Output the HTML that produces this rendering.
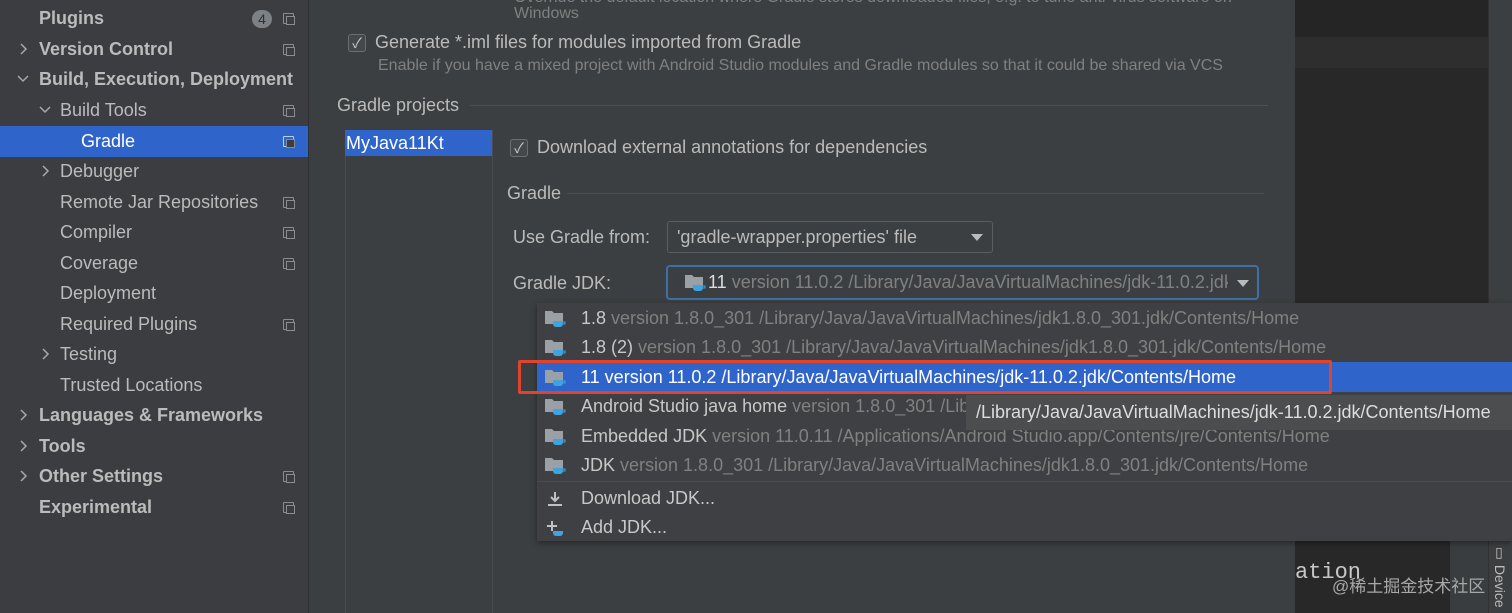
<!DOCTYPE html>
<html><head><meta charset="utf-8"><style>
body{margin:0;width:1512px;height:613px;overflow:hidden;background:#3c3f41;font-family:"Liberation Sans","Noto Sans CJK SC",sans-serif;font-size:18px;color:#bbbbbb;position:relative}
.a{position:absolute;white-space:nowrap}
.side{position:absolute;left:0;top:0;width:308px;height:613px;background:#3b3d41;border-right:1px solid #2e3033}
.si{position:absolute;left:0;width:308px;height:31px;line-height:31px}
.b{font-weight:bold}
.cp{position:absolute;left:283px;top:10px;width:9px;height:9px;border:1px solid #8a8d90;border-radius:1px}
.cp:after{content:"";position:absolute;left:2px;top:2px;width:7px;height:7px;border:1px solid #8a8d90;background:#3b3d41}
.chev{position:absolute;top:9px}
.cb{position:absolute;width:16px;height:16px;border:1px solid #6b6e71;border-radius:3px;background:#45484a;color:#ccc;font-size:14px;line-height:16px;text-align:center}
.g{color:#808080}
.pi{position:absolute;left:537px;width:975px;height:30px;line-height:30px}
.ic{position:absolute;left:8px;top:7px}
.pt{position:absolute;left:44px;color:#c8c8c8}
</style></head><body>
<svg width="0" height="0" style="position:absolute"><defs>
<g id="cr"><path d="M2 1l5 5-5 5" stroke="#a8a8a8" stroke-width="1.5" fill="none"/></g>
<g id="cd"><path d="M1 3l5 5 5-5" stroke="#a8a8a8" stroke-width="1.5" fill="none"/></g>
<g id="jf"><path d="M0 1h7l2 2h9v11H0z" fill="#9aa0a6"/><path d="M8 11h10v3a3 3 0 0 1-3 3h-4a3 3 0 0 1-3-3z" fill="#3fa3e0"/><path d="M18 12h2v2h-2" stroke="#3fa3e0" fill="none"/></g>
</defs></svg>
<div class="side">
 <div class="si b" style="top:3px"><span class="a" style="left:39px">Plugins</span><span class="a" style="left:252px;top:7px;width:20px;height:18px;border-radius:9px;background:#7d8186;color:#2f3134;font-size:14px;line-height:18px;text-align:center;font-weight:normal">4</span><span class="cp"></span></div>
 <div class="si b" style="top:34px"><svg class="chev" style="left:19px" width="12" height="12"><use href="#cr"/></svg><span class="a" style="left:39px">Version Control</span><span class="cp"></span></div>
 <div class="si b" style="top:64px"><svg class="chev" style="left:17px" width="12" height="12"><use href="#cd"/></svg><span class="a" style="left:39px">Build, Execution, Deployment</span></div>
 <div class="si" style="top:95px"><svg class="chev" style="left:39px" width="12" height="12"><use href="#cd"/></svg><span class="a" style="left:60px">Build Tools</span><span class="cp"></span></div>
 <div class="si" style="top:126px;background:#2f65ca;color:#fff"><span class="a" style="left:81px">Gradle</span><span class="cp" style="border-color:#c0cde8"></span></div>
 <div class="si" style="top:156px"><svg class="chev" style="left:41px" width="12" height="12"><use href="#cr"/></svg><span class="a" style="left:60px">Debugger</span></div>
 <div class="si" style="top:187px"><span class="a" style="left:60px">Remote Jar Repositories</span><span class="cp"></span></div>
 <div class="si" style="top:217px"><span class="a" style="left:60px">Compiler</span><span class="cp"></span></div>
 <div class="si" style="top:248px"><span class="a" style="left:60px">Coverage</span><span class="cp"></span></div>
 <div class="si" style="top:278px"><span class="a" style="left:60px">Deployment</span></div>
 <div class="si" style="top:309px"><span class="a" style="left:60px">Required Plugins</span><span class="cp"></span></div>
 <div class="si" style="top:339px"><svg class="chev" style="left:41px" width="12" height="12"><use href="#cr"/></svg><span class="a" style="left:60px">Testing</span></div>
 <div class="si" style="top:370px"><span class="a" style="left:60px">Trusted Locations</span></div>
 <div class="si b" style="top:400px"><svg class="chev" style="left:19px" width="12" height="12"><use href="#cr"/></svg><span class="a" style="left:39px">Languages &amp; Frameworks</span></div>
 <div class="si b" style="top:431px"><svg class="chev" style="left:19px" width="12" height="12"><use href="#cr"/></svg><span class="a" style="left:39px">Tools</span></div>
 <div class="si b" style="top:461px"><svg class="chev" style="left:19px" width="12" height="12"><use href="#cr"/></svg><span class="a" style="left:39px">Other Settings</span><span class="cp"></span></div>
 <div class="si b" style="top:492px"><span class="a" style="left:39px">Experimental</span><span class="cp"></span></div>
</div>

<div class="a" style="left:1295px;top:0;width:193px;height:37px;background:#252525"></div>
<div class="a" style="left:1295px;top:37px;width:193px;height:31px;background:#2e2e2e"></div>
<div class="a" style="left:1295px;top:68px;width:193px;height:545px;background:#282828"></div>
<div class="a" style="left:1450px;top:541px;width:38px;height:72px;background:#3a3d3f"></div>
<div class="a" style="left:1488px;top:0;width:24px;height:613px;background:#3c3f41;border-left:1px solid #323232"></div>
<div class="a" style="left:1295px;top:560px;font-family:'Liberation Mono',monospace;font-size:22px;color:#c8c8c8">ation</div>
<div class="a" style="left:1332px;top:572px;font-size:17px;color:#a8a8a8">@稀土掘金技术社区</div>
<div class="a" style="left:1492px;top:545px;writing-mode:vertical-rl;font-size:14px;color:#bbb">▯ Device</div>

<div class="a g" style="left:514px;top:-11px;font-size:16px">Override the default location where Gradle stores downloaded files, e.g. to tune anti-virus software on</div>
<div class="a g" style="left:514px;top:5px;font-size:16px">Windows</div>
<div class="cb" style="left:348px;top:34px">✓</div>
<div class="a" style="left:375px;top:32px">Generate *.iml files for modules imported from Gradle</div>
<div class="a g" style="left:378px;top:57px;font-size:16px">Enable if you have a mixed project with Android Studio modules and Gradle modules so that it could be shared via VCS</div>
<div class="a" style="left:337px;top:95px">Gradle projects</div>
<div class="a" style="left:470px;top:105px;width:798px;height:1px;background:#4d5053"></div>
<div class="a" style="left:345px;top:130px;width:146px;height:483px;border-left:1px solid #4a4d50;border-right:1px solid #4a4d50;background:#3c3f41"></div>
<div class="a" style="left:345px;top:130px;width:146px;height:26px;background:#2f65ca;color:#fff;line-height:26px;padding-left:1px">MyJava11Kt</div>
<div class="cb" style="left:510px;top:139px">✓</div>
<div class="a" style="left:537px;top:137px">Download external annotations for dependencies</div>
<div class="a" style="left:507px;top:183px">Gradle</div>
<div class="a" style="left:567px;top:193px;width:697px;height:1px;background:#4d5053"></div>
<div class="a" style="left:513px;top:227px">Use Gradle from:</div>
<div class="a" style="left:667px;top:221px;width:324px;height:30px;border:1px solid #5b5e61;border-radius:3px;background:#3c3f41"><span class="a" style="left:9px;top:5px">'gradle-wrapper.properties' file</span><svg class="a" style="left:303px;top:12px" width="12" height="8"><path d="M0 0h12L6 7z" fill="#bbb"/></svg></div>
<div class="a" style="left:513px;top:273px">Gradle JDK:</div>
<div class="a" style="left:666px;top:265px;width:589px;height:31px;border:2px solid #3f6fa8;border-radius:4px;background:#3c3f41;overflow:hidden">
 <svg class="a" style="left:17px;top:7px" width="22" height="19" viewBox="0 0 22 19"><use href="#jf"/></svg>
 <span class="a" style="left:40px;top:5px;width:520px;overflow:hidden;color:#ddd">11 <span class="g">version 11.0.2 /Library/Java/JavaVirtualMachines/jdk-11.0.2.jdk/Contents/Home</span></span>
 <svg class="a" style="left:569px;top:13px" width="12" height="8"><path d="M0 0h12L6 7z" fill="#bbb"/></svg>
</div>

<div class="a" style="left:537px;top:303px;width:975px;height:238px;background:#3e4043;box-shadow:0 2px 6px rgba(0,0,0,.4)"></div>
<div class="pi" style="top:303px"><svg class="ic" width="22" height="19"><use href="#jf"/></svg><span class="pt">1.8 <span class="g">version 1.8.0_301 /Library/Java/JavaVirtualMachines/jdk1.8.0_301.jdk/Contents/Home</span></span></div>
<div class="pi" style="top:332px"><svg class="ic" width="22" height="19"><use href="#jf"/></svg><span class="pt">1.8 (2) <span class="g">version 1.8.0_301 /Library/Java/JavaVirtualMachines/jdk1.8.0_301.jdk/Contents/Home</span></span></div>
<div class="pi" style="top:362px;background:#2f65ca"><svg class="ic" width="22" height="19"><use href="#jf"/></svg><span class="pt" style="color:#fff">11 version 11.0.2 /Library/Java/JavaVirtualMachines/jdk-11.0.2.jdk/Contents/Home</span></div>
<div class="a" style="left:518px;top:360px;width:808px;height:28px;border:3px solid #e0442f;border-radius:2px"></div>
<div class="pi" style="top:391px"><svg class="ic" width="22" height="19"><use href="#jf"/></svg><span class="pt">Android Studio java home <span class="g">version 1.8.0_301 /Library/Java/JavaVirtualMachines/jdk1.8.0_301.jdk/Contents/Home</span></span></div>
<div class="pi" style="top:421px"><svg class="ic" width="22" height="19"><use href="#jf"/></svg><span class="pt">Embedded JDK <span class="g">version 11.0.11 /Applications/Android Studio.app/Contents/jre/Contents/Home</span></span></div>
<div class="pi" style="top:450px"><svg class="ic" width="22" height="19"><use href="#jf"/></svg><span class="pt">JDK <span class="g">version 1.8.0_301 /Library/Java/JavaVirtualMachines/jdk1.8.0_301.jdk/Contents/Home</span></span></div>
<div class="a" style="left:537px;top:481px;width:975px;height:1px;background:#4b4e51"></div>
<div class="pi" style="top:483px"><svg class="ic" width="22" height="19" viewBox="0 0 22 19"><path d="M10 2v9M6 7l4 4 4-4M3 15h14" stroke="#c0c0c0" stroke-width="2" fill="none"/></svg><span class="pt">Download JDK...</span></div>
<div class="pi" style="top:512px"><svg class="ic" width="22" height="19" viewBox="0 0 22 19"><path d="M7 2v10M2 7h10" stroke="#c0c0c0" stroke-width="2"/><path d="M8 12h10v2a3 3 0 0 1-3 3h-4a3 3 0 0 1-3-3z" fill="#3fa3e0"/></svg><span class="pt">Add JDK...</span></div>
<div class="a" style="left:966px;top:395px;width:546px;height:35px;background:#4b4d4f;color:#dddddd;line-height:35px"><span style="padding-left:10px">/Library/Java/JavaVirtualMachines/jdk-11.0.2.jdk/Contents/Home</span></div>
</body></html>
